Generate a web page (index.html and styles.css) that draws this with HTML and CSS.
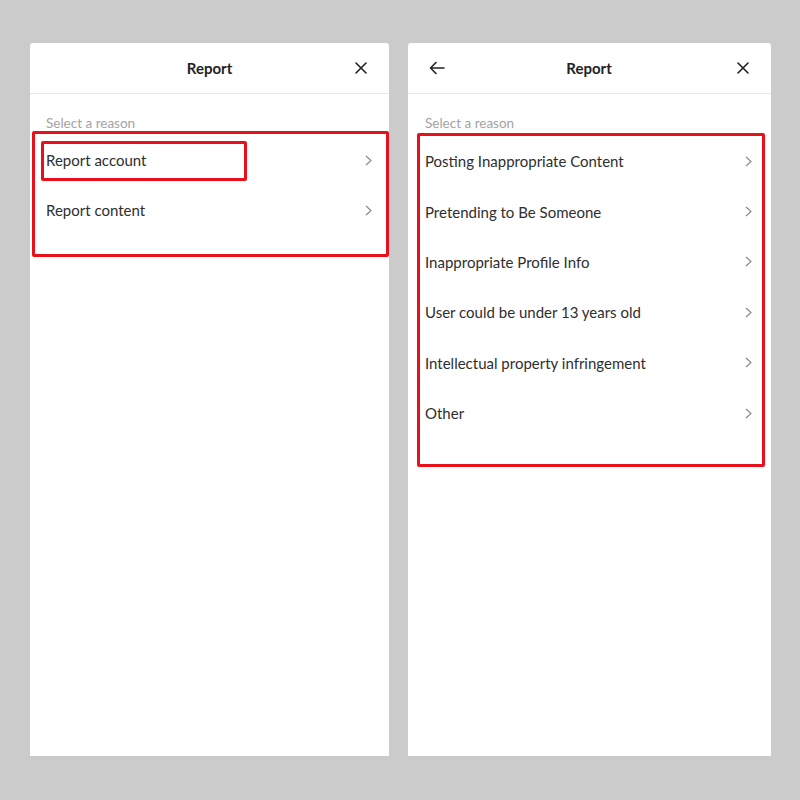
FILE: index.html
```html
<!DOCTYPE html>
<html lang="en">
  <head>
    <meta charset="UTF-8" />
    <meta name="viewport" content="width=device-width, initial-scale=1.0" />
    <title>Report</title>
    <link rel="stylesheet" href="styles.css">
  </head>
  <body>
    <div class="screens">
      <div class="panel panel-left">
        <div class="panel-header">
          <span class="header-side"></span>
          <h2>Report</h2>
          <span class="header-side icon-close">
            <svg width="12" height="12" viewBox="0 0 12 12"><path d="M1 1L11 11M11 1L1 11" stroke="#222" stroke-width="1.6" fill="none" stroke-linecap="round"/></svg>
          </span>
        </div>
        <div class="panel-body">
          <p class="hint">Select a reason</p>
          <div class="mark-box mark-left">
            <div class="option">
              <span>Report account</span>
              <svg class="chev" width="7" height="11" viewBox="0 0 7 11"><path d="M1 1L6 5.5L1 10" stroke="#8a8a8a" stroke-width="1.2" fill="none"/></svg>
              <div class="mark-small"></div>
            </div>
            <div class="option">
              <span>Report content</span>
              <svg class="chev" width="7" height="11" viewBox="0 0 7 11"><path d="M1 1L6 5.5L1 10" stroke="#8a8a8a" stroke-width="1.2" fill="none"/></svg>
            </div>
          </div>
        </div>
      </div>

      <div class="panel panel-right">
        <div class="panel-header">
          <span class="header-side icon-back">
            <svg width="16" height="14" viewBox="0 0 16 14"><path d="M15 7H1.5M7 1.5L1.5 7L7 12.5" stroke="#222" stroke-width="1.6" fill="none" stroke-linecap="round" stroke-linejoin="round"/></svg>
          </span>
          <h2>Report</h2>
          <span class="header-side icon-close">
            <svg width="12" height="12" viewBox="0 0 12 12"><path d="M1 1L11 11M11 1L1 11" stroke="#222" stroke-width="1.6" fill="none" stroke-linecap="round"/></svg>
          </span>
        </div>
        <div class="panel-body">
          <p class="hint">Select a reason</p>
          <div class="mark-box mark-right">
            <div class="option">
              <span>Posting Inappropriate Content</span>
              <svg class="chev" width="7" height="11" viewBox="0 0 7 11"><path d="M1 1L6 5.5L1 10" stroke="#8a8a8a" stroke-width="1.2" fill="none"/></svg>
            </div>
            <div class="option">
              <span>Pretending to Be Someone</span>
              <svg class="chev" width="7" height="11" viewBox="0 0 7 11"><path d="M1 1L6 5.5L1 10" stroke="#8a8a8a" stroke-width="1.2" fill="none"/></svg>
            </div>
            <div class="option">
              <span>Inappropriate Profile Info</span>
              <svg class="chev" width="7" height="11" viewBox="0 0 7 11"><path d="M1 1L6 5.5L1 10" stroke="#8a8a8a" stroke-width="1.2" fill="none"/></svg>
            </div>
            <div class="option">
              <span>User could be under 13 years old</span>
              <svg class="chev" width="7" height="11" viewBox="0 0 7 11"><path d="M1 1L6 5.5L1 10" stroke="#8a8a8a" stroke-width="1.2" fill="none"/></svg>
            </div>
            <div class="option">
              <span>Intellectual property infringement</span>
              <svg class="chev" width="7" height="11" viewBox="0 0 7 11"><path d="M1 1L6 5.5L1 10" stroke="#8a8a8a" stroke-width="1.2" fill="none"/></svg>
            </div>
            <div class="option">
              <span>Other</span>
              <svg class="chev" width="7" height="11" viewBox="0 0 7 11"><path d="M1 1L6 5.5L1 10" stroke="#8a8a8a" stroke-width="1.2" fill="none"/></svg>
            </div>
          </div>
        </div>
      </div>
    </div>
  </body>
</html>
```

FILE: styles.css
```css
body {
  margin: 0;
  background-color: #cbcbcb;
  font-family: Lato, "Open Sans", Arial, sans-serif;
  color: #2e2e2e;
}
.screens {
  display: flex;
  gap: 19px;
  padding: 43px 0 0 30px;
}
.panel {
  background-color: white;
  height: 713px;
  border-radius: 3px 3px 0 0;
}
.panel-left {
  width: 359px;
}
.panel-right {
  width: 363px;
}
.panel-header {
  height: 50px;
  display: flex;
  align-items: center;
  justify-content: space-between;
  padding: 0 22px;
  border-bottom: 1px solid #e6e6e6;
}
.panel-header h2 {
  margin: 0;
  font-size: 15px;
  font-weight: bold;
  color: #222;
}
.header-side {
  width: 16px;
  display: flex;
  align-items: center;
}
.icon-close {
  justify-content: flex-end;
}
.panel-right .panel-header {
  padding: 0 22px 0 21px;
}
.panel-body {
  padding-top: 21px;
}
.hint {
  margin: 0 0 0 16px;
  font-size: 13.5px;
  color: #a3a3a3;
  line-height: 16px;
}
.panel-right .hint {
  margin-left: 17px;
}
.mark-box {
  border: 3px solid #e8101a;
  border-radius: 2px;
}
.mark-left {
  margin: 0 0 0 2px;
  padding: 1px 0 19px 0;
}
.mark-right {
  margin: 2px 6px 0 9px;
  padding: 0 0 26px 0;
}
.option {
  position: relative;
  height: 50px;
  display: flex;
  align-items: center;
  justify-content: space-between;
  font-size: 15px;
}
.mark-left .option {
  padding: 0 14px 0 11px;
}
.mark-right .option {
  height: 50.4px;
  padding: 0 10px 0 5px;
}
.chev {
  flex-shrink: 0;
}
.mark-small {
  position: absolute;
  left: 6px;
  top: 6px;
  width: 200px;
  height: 34px;
  border: 3px solid #e8101a;
  border-radius: 2px;
}
```
